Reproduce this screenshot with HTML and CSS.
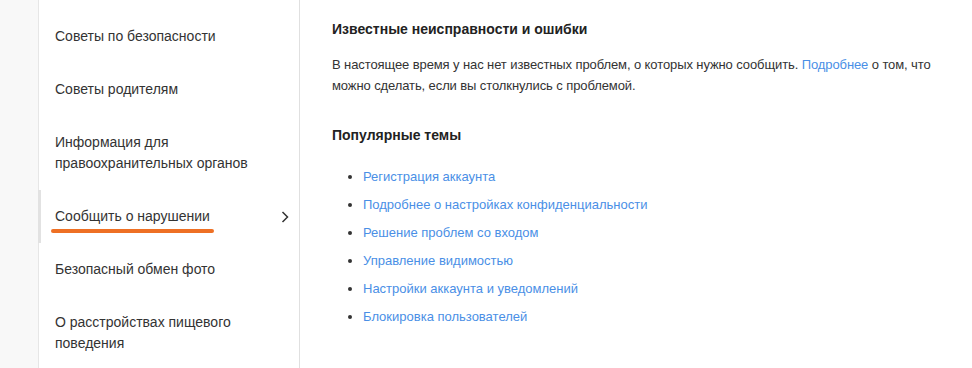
FILE: index.html
```html
<!DOCTYPE html>
<html lang="ru">
<head>
  <meta charset="UTF-8">
  <meta name="viewport" content="width=device-width, initial-scale=1.0">
  <title>Справка</title>
  <link rel="stylesheet" href="styles.css">
</head>
<body>

<div class="page">
  <div class="gutter"></div>

  <nav class="sidebar">
    <a href="#" class="nav-item"><span class="label">Советы по безопасности</span></a>
    <a href="#" class="nav-item"><span class="label">Советы родителям</span></a>
    <a href="#" class="nav-item"><span class="label">Информация для правоохранительных органов</span></a>
    <a href="#" class="nav-item active">
      <span class="label">Сообщить о нарушении</span>
      <svg class="chevron" width="8" height="12" viewBox="0 0 8 12"><polyline points="1.5,1 6.5,6 1.5,11" fill="none" stroke="#333" stroke-width="1.5"/></svg>
    </a>
    <a href="#" class="nav-item"><span class="label">Безопасный обмен фото</span></a>
    <a href="#" class="nav-item"><span class="label">О расстройствах пищевого поведения</span></a>
  </nav>

  <main class="content">
    <h2>Известные неисправности и ошибки</h2>
    <p>В настоящее время у нас нет известных проблем, о которых нужно сообщить. <a href="#">Подробнее</a> о том, что можно сделать, если вы столкнулись с проблемой.</p>

    <h2 class="topics-title">Популярные темы</h2>
    <ul class="topics">
      <li><a href="#">Регистрация аккаунта</a></li>
      <li><a href="#">Подробнее о настройках конфиденциальности</a></li>
      <li><a href="#">Решение проблем со входом</a></li>
      <li><a href="#">Управление видимостью</a></li>
      <li><a href="#">Настройки аккаунта и уведомлений</a></li>
      <li><a href="#">Блокировка пользователей</a></li>
    </ul>
  </main>
</div>

</body>
</html>
```

FILE: styles.css
```css
body {
  font-family: "Liberation Sans", Arial, sans-serif;
  margin: 0;
  padding: 0;
  background-color: #fff;
  color: #333;
}

a {
  color: #4a8fe6;
  text-decoration: none;
}

.page {
  display: flex;
  min-height: 368px;
}

.gutter {
  width: 38px;
  background-color: #f8f8f8;
}

.sidebar {
  width: 260px;
  padding-top: 10px;
  border-left: 1px solid #e6e6e6;
  border-right: 1px solid #e0e0e0;
  display: flex;
  flex-direction: column;
}

.nav-item {
  position: relative;
  display: flex;
  align-items: center;
  justify-content: space-between;
  padding: 16px 10px 16px 16px;
  font-size: 14px;
  line-height: 21px;
  color: #333;
}

.nav-item.active::before {
  content: "";
  position: absolute;
  left: -1px;
  top: 0;
  bottom: 0;
  width: 3px;
  background-color: #e2e2e2;
}

.nav-item .label {
  position: relative;
}

.nav-item.active .label::after {
  content: "";
  position: absolute;
  left: -4px;
  right: -4px;
  bottom: -6px;
  height: 4px;
  border-radius: 2px;
  background-color: #ee7024;
}

.chevron {
  flex-shrink: 0;
}

.content {
  flex: 1;
  padding: 19px 32px 0 32px;
}

.content h2 {
  margin: 0;
  font-size: 14px;
  line-height: 20px;
  font-weight: bold;
  color: #222;
}

.content p {
  margin: 15px 0 0 0;
  font-size: 13px;
  line-height: 21px;
  letter-spacing: -0.1px;
}

.content .topics-title {
  margin-top: 29px;
}

.topics {
  margin: 21px 0 0 0;
  padding-left: 31px;
  font-size: 13px;
  line-height: 21px;
}

.topics li {
  margin-bottom: 7px;
}
```
